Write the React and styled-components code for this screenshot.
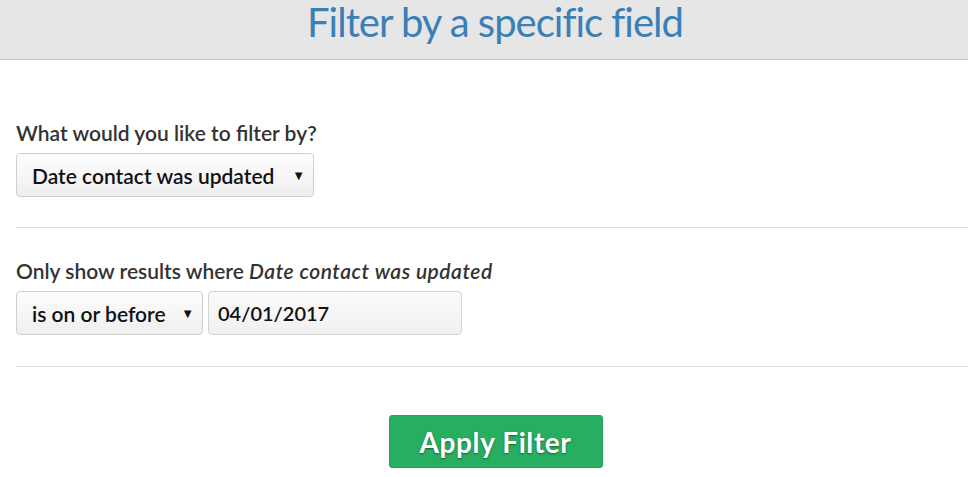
import React from "react";
import styled, { createGlobalStyle } from "styled-components";

const GlobalStyle = createGlobalStyle`
  html, body {
    margin: 0;
    padding: 0;
    background: #fff;
    font-family: Lato, "Open Sans", sans-serif;
    color: #333;
  }
`;

const Header = styled("div")`
  height: 59px;
  background: #e6e6e6;
  border-bottom: 1px solid #c9c9c9;
  display: flex;
  justify-content: center;
  align-items: flex-start;
  padding-left: 22px;
`;

const Title = styled("h1")`
  margin: 0;
  font-size: 40px;
  font-weight: normal;
  line-height: 46px;
  margin-top: -1px;
  letter-spacing: -1px;
  color: #3a80b6;
`;

const Content = styled("div")`
  padding: 61px 0 0 16px;
`;

const Section = styled("div")`
  padding-bottom: ${({ last }) => (last ? "31px" : "30px")};
  border-bottom: 1px solid #dcdcdc;
  margin-bottom: ${({ last }) => (last ? "48px" : "31px")};
`;

const Label = styled("div")`
  font-size: 21px;
  font-weight: 600;
  line-height: 24px;
  color: #333;
  margin-bottom: 8px;
  em {
    font-style: italic;
    letter-spacing: 0.5px;
  }
`;

const Row = styled("div")`
  display: flex;
  gap: 5px;
`;

const SelectBox = styled("div")`
  box-sizing: border-box;
  width: ${({ width }) => width}px;
  height: 44px;
  border: 1px solid #cfcfcf;
  border-radius: 4px;
  background: linear-gradient(#fdfdfd, #efefef);
  display: flex;
  align-items: center;
  justify-content: space-between;
  padding: 0 8px 0 15px;
  font-size: 21px;
  font-weight: 600;
  color: #111;
`;

const Arrow = styled("span")`
  font-size: 13px;
  color: #111;
`;

const Input = styled("div")`
  box-sizing: border-box;
  width: 254px;
  height: 44px;
  border: 1px solid #d3d3d3;
  border-radius: 4px;
  background: linear-gradient(#fafafa, #f1f1f1);
  display: flex;
  align-items: center;
  padding: 0 9px;
  font-size: 20px;
  font-weight: 600;
  color: #111;
`;

const ButtonRow = styled("div")`
  display: flex;
  justify-content: center;
  padding-left: 7px;
`;

const Button = styled("button")`
  width: 214px;
  height: 53px;
  border: 1px solid #24a158;
  border-radius: 3px;
  background: #27ae60;
  color: #fff;
  font-family: Lato, sans-serif;
  font-weight: bold;
  font-size: 28px;
  letter-spacing: 0.6px;
  text-shadow: 0 1px 2px rgba(0, 0, 0, 0.45);
  cursor: pointer;
`;

export default function App() {
  return (
    <>
      <GlobalStyle />
      <Header>
        <Title>Filter by a specific field</Title>
      </Header>
      <Content>
        <Section>
          <Label>What would you like to filter by?</Label>
          <SelectBox width={298}>
            <span>Date contact was updated</span>
            <Arrow>▼</Arrow>
          </SelectBox>
        </Section>
        <Section last>
          <Label>
            Only show results where <em>Date contact was updated</em>
          </Label>
          <Row>
            <SelectBox width={187}>
              <span>is on or before</span>
              <Arrow>▼</Arrow>
            </SelectBox>
            <Input>04/01/2017</Input>
          </Row>
        </Section>
        <ButtonRow>
          <Button>Apply Filter</Button>
        </ButtonRow>
      </Content>
    </>
  );
}
